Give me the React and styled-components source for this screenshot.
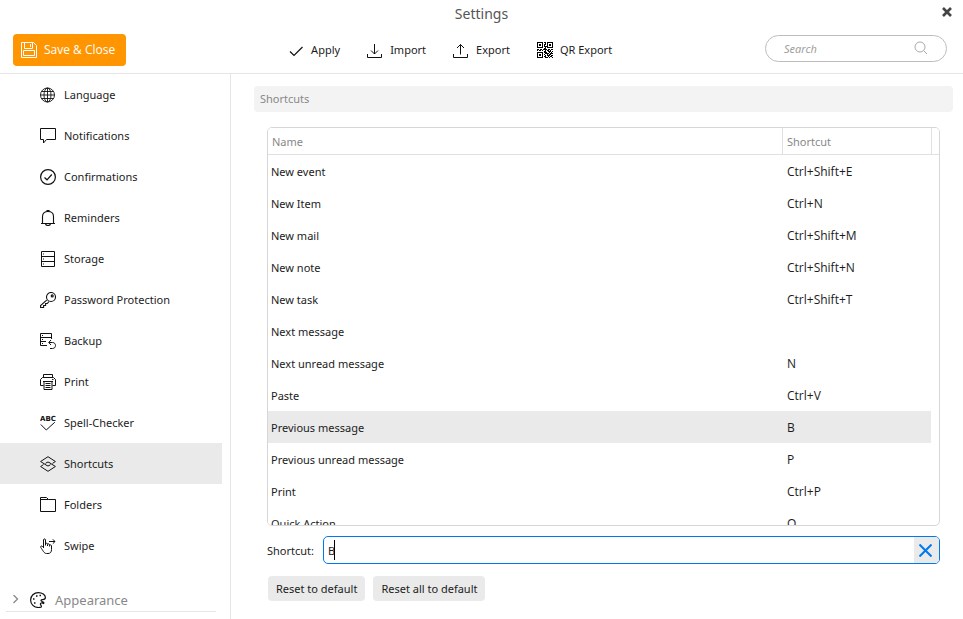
import React, { useState } from "react";
import styled, { createGlobalStyle } from "styled-components";

const GlobalStyle = createGlobalStyle`
  * {
    box-sizing: border-box;
  }

  body {
    margin: 0;
    background-color: #fff;
  }

  body,
  button,
  input,
  table {
    font-family: "Noto Sans", "Open Sans", sans-serif;
    font-size: 11px;
    color: #1c1c1c;
  }
`;

const Window = styled.div`
  display: flex;
  flex-direction: column;
  height: 100vh;
  min-height: 400px;
  overflow: hidden;
`;

const TitleBar = styled.header`
  display: grid;
  grid-template-columns: 1fr auto 1fr;
  align-items: center;
  height: 28px;
  flex-shrink: 0;
`;

const Title = styled.h1`
  grid-column: 2;
  margin: 0;
  font-size: 14px;
  font-weight: 400;
  line-height: 28px;
  color: #555;
`;

const CloseButton = styled.button`
  justify-self: end;
  display: flex;
  align-self: start;
  margin: 7px 11px 0 0;
  padding: 0;
  border: none;
  background: none;
  cursor: pointer;
`;

const Toolbar = styled.div`
  display: flex;
  align-items: center;
  height: 46px;
  flex-shrink: 0;
  padding: 0 16px 2px 13px;
  border-bottom: 1px solid #e6e6e6;
`;

const SaveButton = styled.button`
  display: flex;
  align-items: center;
  gap: 7px;
  height: 32px;
  padding: 0 11px 0 8px;
  border: none;
  border-radius: 4px;
  background-color: #ff9500;
  font-family: "Open Sans", sans-serif;
  font-size: 12px;
  color: #fff;
  cursor: pointer;
`;

const Actions = styled.div`
  display: flex;
  flex: 1;
  justify-content: center;
  gap: 27px;
  padding-left: 9px;
`;

const ActionButton = styled.button`
  display: flex;
  align-items: center;
  gap: 7px;
  padding: 0;
  border: none;
  background: none;
  cursor: pointer;
`;

const SearchBox = styled.label`
  display: flex;
  align-items: center;
  width: 182px;
  height: 27px;
  margin-bottom: 3px;
  padding: 0 18px;
  border: 1px solid #bdbdbd;
  border-radius: 14px;
`;

const SearchInput = styled.input`
  flex: 1;
  min-width: 0;
  padding: 0;
  border: none;
  outline: none;
  background: none;

  &::placeholder {
    color: #a0a0a0;
    font-style: italic;
  }
`;

const Body = styled.div`
  display: flex;
  flex: 1;
  min-height: 0;
`;

const Sidebar = styled.nav`
  width: 231px;
  flex-shrink: 0;
  border-right: 1px solid #e6e6e6;
  overflow: hidden;
`;

const SideLink = styled.a`
  display: flex;
  align-items: center;
  gap: 8px;
  height: 41px;
  margin-right: 8px;
  padding-left: 40px;
  background-color: ${(props) => (props.$active ? "#eaeaea" : "transparent")};
  color: #1c1c1c;
  text-decoration: none;
`;

const SideGroup = styled.button`
  display: flex;
  align-items: center;
  width: 210px;
  height: 24px;
  margin: 22px 0 0 6px;
  padding: 0 0 0 4px;
  border: none;
  border-bottom: 1px solid #e6e6e6;
  background: none;
  font-size: 13px;
  color: #888;
  cursor: pointer;

  svg:first-child {
    margin-right: 10px;
  }

  svg:nth-child(2) {
    margin-right: 9px;
  }
`;

const Content = styled.main`
  display: flex;
  flex-direction: column;
  flex: 1;
  min-width: 0;
  padding: 12px 10px 18px 23px;
`;

const SectionTitle = styled.h2`
  margin: 0 0 15px;
  padding-left: 6px;
  border-radius: 4px;
  background-color: #f3f3f3;
  font-size: 11px;
  font-weight: 400;
  line-height: 26px;
  color: #888;
`;

const Panel = styled.div`
  display: flex;
  flex-direction: column;
  flex: 1;
  min-height: 0;
  padding: 0 13px;
`;

const TableFrame = styled.div`
  flex: 1;
  min-height: 0;
  overflow-y: auto;
  scrollbar-width: none;
  border: 1px solid #d6d6d6;
  border-radius: 5px;
`;

const Table = styled.table`
  width: 100%;
  table-layout: fixed;
  border-collapse: separate;
  border-spacing: 0;
`;

const HeadCell = styled.th`
  position: sticky;
  top: 0;
  width: ${(props) => props.$width || "auto"};
  height: 27px;
  padding: 0 0 0 4px;
  border-bottom: 1px solid #e0e0e0;
  border-left: ${(props) => (props.$divided ? "1px solid #e0e0e0" : "none")};
  background-color: #fff;
  font-weight: 400;
  text-align: left;
  color: #888;
`;

const Cell = styled.td`
  height: 32px;
  padding: 0 0 0 3px;
`;

const KeysCell = styled(Cell)`
  padding-left: 5px;
  font-family: "Open Sans", sans-serif;
  font-size: 12px;
`;

const Row = styled.tr`
  cursor: default;

  ${Cell}:not(:last-child) {
    background-color: ${(props) => (props.$selected ? "#eaeaea" : "#fff")};
  }
`;

const ShortcutRow = styled.div`
  display: flex;
  align-items: center;
  gap: 9px;
  margin: 10px 0 12px;
`;

const ShortcutField = styled.div`
  position: relative;
  display: flex;
  flex: 1;
  height: 28px;
  border: 1px solid #0078f0;
  border-radius: 5px;
  overflow: hidden;
`;

const ShortcutInput = styled.input`
  flex: 1;
  min-width: 0;
  padding: 0 4px;
  border: none;
  outline: none;
  background: none;
  caret-color: transparent;
`;

const Caret = styled.span`
  position: absolute;
  top: 3px;
  left: 10px;
  width: 1px;
  height: 20px;
  background-color: #000;
`;

const ClearButton = styled.button`
  display: flex;
  align-items: center;
  justify-content: center;
  width: 25px;
  padding: 0 2px 0 0;
  border: none;
  background-color: #eaeaea;
  cursor: pointer;
`;

const Buttons = styled.div`
  display: flex;
  gap: 8px;
  padding-left: 1px;
`;

const ResetButton = styled.button`
  height: 25px;
  padding: 0 8px;
  border: none;
  border-radius: 4px;
  background-color: #eaeaea;
  cursor: pointer;
`;

const Svg = styled.svg`
  flex-shrink: 0;
  fill: none;
  stroke: ${(props) => props.$color || "#111"};
  stroke-width: ${(props) => props.$weight || 1};
`;

const Icon = ({ size = 16, children, ...rest }) => (
  <Svg width={size} height={size} viewBox={`0 0 ${size} ${size}`} aria-hidden="true" {...rest}>
    {children}
  </Svg>
);

const icons = {
  save: (
    <Icon $color="#fff">
      <path d="M.5.5h12l3 3v12H.5zM3.500.5v6h8v-6M9.500 2v3M2.500 13.500v-5h11v5z" />
    </Icon>
  ),
  apply: (
    <Icon $weight={1.2}>
      <path d="M2 9.500l4 4L14.500 5" />
    </Icon>
  ),
  import: (
    <Icon>
      <path d="M.5 12v3.500h14V12M7.500 2v10M4 8.500L7.500 12 11 8.500" />
    </Icon>
  ),
  export: (
    <Icon>
      <path d="M.5 12v3.500h14V12M7.500 12.500v-10M4 6l3.500-3.500L11 6" />
    </Icon>
  ),
  language: (
    <Icon $weight={0.9}>
      <circle cx="7.500" cy="8" r="7" />
      <ellipse cx="7.500" cy="8" rx="3.500" ry="7" />
      <path d="M7.500 1v14M.5 8h14M1.500 4.500h12M1.500 11.500h12" />
    </Icon>
  ),
  notifications: (
    <Icon>
      <path d="M.5.5h15v11H6.500L3.500 15v-3.500h-3z" />
    </Icon>
  ),
  confirmations: (
    <Icon $weight={1.2}>
      <circle cx="8" cy="8" r="7.400" />
      <path d="M4.500 8.500l2.500 2.300L11.800 5.500" />
    </Icon>
  ),
  reminders: (
    <Icon $weight={1.1}>
      <path d="M1 13.500h14M2.500 13.500V6.500C2.500 3 5 1.500 8 1.500s5.500 1.500 5.500 5v7M7 1.500V.6h2v.9M5.500 14c.5 2 4.500 2 5 0" />
    </Icon>
  ),
  storage: (
    <Icon>
      <path d="M1.500.5h13v15h-13zM1.500 5.500h13M1.500 10.500h13M3 3h1M3 8h1M3 13h1" />
    </Icon>
  ),
  password: (
    <Icon $weight={1.1}>
      <path d="M6.700 8.200L.6 13.500v2h3v-2h2v-2h1.700l1.600-1.800" />
      <circle cx="11" cy="5" r="4.500" />
      <circle cx="12.200" cy="3.900" r="1" />
    </Icon>
  ),
  backup: (
    <Icon>
      <path d="M11.500 6V.5H.5v12H7M.5 4.500h11M.5 8.500H6M2 2.500h1M2 6.500h1M2 10.500h1" />
      <path d="M9 9.500h3.500c4 0 4 6 0 6H10M11 7L8.700 9.500 11 12" />
    </Icon>
  ),
  print: (
    <Icon>
      <path d="M3.500 3.500v-3h9v3M3.500 11.500h-3v-6l2-2h11l2 2v6h-3M3 7.500h10M4 7.500v8h8v-8M5.500 9.500h5M5.500 11.500h5M5.500 13.500h5M12 5.500h1.500" />
    </Icon>
  ),
  spell: (
    <Icon>
      <text
        x="0"
        y="6"
        fontSize="7"
        fontWeight="700"
        fontFamily="DejaVu Sans, sans-serif"
        fill="#111"
        stroke="none"
      >
        ABC
      </text>
      <path d="M.8 9.500l5.500 5.500 8.500-7.800" />
    </Icon>
  ),
  shortcuts: (
    <Icon>
      <path d="M12.500 7.400l2.900-1.900L8 .7.6 5.500 7 9.600q1 .6 2 0l1.500-1" />
      <path d="M3.500 8.600L.6 10.500 8 15.300l7.400-4.800L9 6.400q-1-.6-2 0l-1.500 1" />
    </Icon>
  ),
  folders: (
    <Icon>
      <path d="M.5 14.500V.5h6l2 2h7v12zM.5 2.500h8" />
    </Icon>
  ),
  swipe: (
    <Icon>
      <path d="M3.500 10V2c0-1.500 2-1.500 2 0v5.500M5.500 5.500c2-.8 2 0 2 2.500M7.500 6c2-.6 2 .3 2 2.500M9.500 7c2-.5 2 .5 2 2v2.500c0 2.500-1 4-3.500 4H6.500C4 15.500 3 12.500.8 9.500c-.6-2 1.200-2 2.700 0M9 3.500h6M12.800 1.300L15 3.500l-2.200 2.200" />
    </Icon>
  ),
  chevron: (
    <Icon size={10} $color="#888" $weight={1.3}>
      <path d="M3.500 0l4 4-4 4" />
    </Icon>
  ),
  palette: (
    <Icon $weight={1.2}>
      <path d="M13.500 11.500c-1.500-1-3.500-.7-3 1 .3 1 1.300 1.500.8 2.300-.4.600-1.600.7-2.800.7C4 15.500.6 12.300.6 8 .6 4 4 .6 8.300.6c4 0 7 2.300 7.100 5 0 1.700-1.400 2-2.800 2-2 .1-2.100 1.400-.6 1.900 1.700.6 2.300 1.300 1.500 2z" />
      <path d="M6 4h1.500M9.500 3.500H11M3 7h1.500M4 11h1.500" strokeWidth="1.600" />
    </Icon>
  ),
  search: (
    <Icon size={14} $color="#aaa">
      <circle cx="6" cy="6" r="5" />
      <path d="M9.500 9.500L13 13" />
    </Icon>
  ),
  close: (
    <Icon size={10} $color="#444" $weight={2.6}>
      <path d="M1 1l8 8M9 1L1 9" />
    </Icon>
  ),
  clear: (
    <Icon size={13} $color="#0078f0" $weight={2}>
      <path d="M.5.5l12 12M12.500.5l-12 12" />
    </Icon>
  ),
};

const qrRows = [
  "1111110110111111",
  "1000010010100001",
  "1011010110101101",
  "1011010100101101",
  "1000010111100001",
  "1111110010111111",
  "0000000110000000",
  "1101101111011011",
  "1011010010110100",
  "0000000110011101",
  "1111110111001010",
  "1000010011110111",
  "1011010100101100",
  "1011010010111011",
  "1000010110010110",
  "1111110011101001",
];

const QrIcon = () => (
  <Icon shapeRendering="crispEdges">
    {qrRows.map((row, y) =>
      row
        .split("")
        .map((bit, x) =>
          bit === "1" ? (
            <rect key={`${x}-${y}`} x={x} y={y} width="1" height="1" fill="#000" stroke="none" />
          ) : null
        )
    )}
  </Icon>
);

const sideItems = [
  { id: "language", label: "Language" },
  { id: "notifications", label: "Notifications" },
  { id: "confirmations", label: "Confirmations" },
  { id: "reminders", label: "Reminders" },
  { id: "storage", label: "Storage" },
  { id: "password", label: "Password Protection" },
  { id: "backup", label: "Backup" },
  { id: "print", label: "Print" },
  { id: "spell", label: "Spell-Checker" },
  { id: "shortcuts", label: "Shortcuts" },
  { id: "folders", label: "Folders" },
  { id: "swipe", label: "Swipe" },
];

const initialShortcuts = [
  { name: "New event", keys: "Ctrl+Shift+E" },
  { name: "New Item", keys: "Ctrl+N" },
  { name: "New mail", keys: "Ctrl+Shift+M" },
  { name: "New note", keys: "Ctrl+Shift+N" },
  { name: "New task", keys: "Ctrl+Shift+T" },
  { name: "Next message", keys: "" },
  { name: "Next unread message", keys: "N" },
  { name: "Paste", keys: "Ctrl+V" },
  { name: "Previous message", keys: "B" },
  { name: "Previous unread message", keys: "P" },
  { name: "Print", keys: "Ctrl+P" },
  { name: "Quick Action", keys: "Q" },
];

function App() {
  const [section, setSection] = useState("shortcuts");
  const [shortcuts, setShortcuts] = useState(initialShortcuts);
  const [selected, setSelected] = useState(8);

  const changeKeys = (keys) => {
    setShortcuts(shortcuts.map((item, i) => (i === selected ? { ...item, keys } : item)));
  };

  const resetSelected = () => {
    changeKeys(initialShortcuts[selected].keys);
  };

  return (
    <Window>
      <GlobalStyle />
      <TitleBar>
        <Title>Settings</Title>
        <CloseButton type="button" aria-label="Close">
          {icons.close}
        </CloseButton>
      </TitleBar>
      <Toolbar>
        <SaveButton type="button">
          {icons.save}
          Save &amp; Close
        </SaveButton>
        <Actions>
          <ActionButton type="button">
            {icons.apply}
            Apply
          </ActionButton>
          <ActionButton type="button">
            {icons.import}
            Import
          </ActionButton>
          <ActionButton type="button">
            {icons.export}
            Export
          </ActionButton>
          <ActionButton type="button">
            <QrIcon />
            QR Export
          </ActionButton>
        </Actions>
        <SearchBox>
          <SearchInput type="text" placeholder="Search" aria-label="Search" />
          {icons.search}
        </SearchBox>
      </Toolbar>
      <Body>
        <Sidebar>
          {sideItems.map((item) => (
            <SideLink
              key={item.id}
              href={`#${item.id}`}
              $active={item.id === section}
              onClick={() => setSection(item.id)}
            >
              {icons[item.id]}
              {item.label}
            </SideLink>
          ))}
          <SideGroup type="button">
            {icons.chevron}
            {icons.palette}
            Appearance
          </SideGroup>
        </Sidebar>
        <Content>
          <SectionTitle>Shortcuts</SectionTitle>
          <Panel>
            <TableFrame>
              <Table>
                <thead>
                  <tr>
                    <HeadCell>Name</HeadCell>
                    <HeadCell $width="149px" $divided>
                      Shortcut
                    </HeadCell>
                    <HeadCell $width="8px" $divided />
                  </tr>
                </thead>
                <tbody>
                  {shortcuts.map((item, i) => (
                    <Row key={item.name} $selected={i === selected} onClick={() => setSelected(i)}>
                      <Cell>{item.name}</Cell>
                      <KeysCell>{item.keys}</KeysCell>
                      <Cell />
                    </Row>
                  ))}
                </tbody>
              </Table>
            </TableFrame>
            <ShortcutRow>
              <label htmlFor="shortcut">Shortcut:</label>
              <ShortcutField>
                <ShortcutInput
                  id="shortcut"
                  type="text"
                  value={shortcuts[selected].keys}
                  onChange={(e) => changeKeys(e.target.value)}
                />
                <Caret />
                <ClearButton type="button" aria-label="Clear" onClick={() => changeKeys("")}>
                  {icons.clear}
                </ClearButton>
              </ShortcutField>
            </ShortcutRow>
            <Buttons>
              <ResetButton type="button" onClick={resetSelected}>
                Reset to default
              </ResetButton>
              <ResetButton type="button" onClick={() => setShortcuts(initialShortcuts)}>
                Reset all to default
              </ResetButton>
            </Buttons>
          </Panel>
        </Content>
      </Body>
    </Window>
  );
}

export default App;
